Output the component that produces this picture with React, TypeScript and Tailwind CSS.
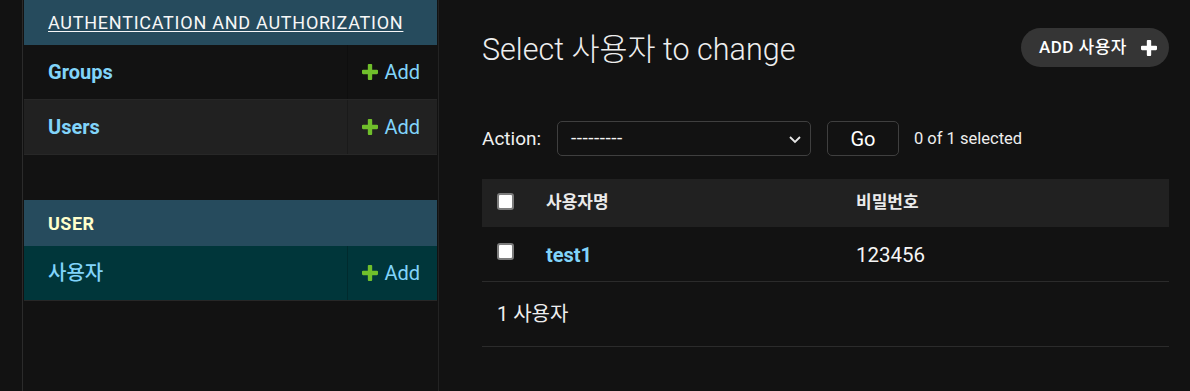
import React from 'react';

const PLUS_PATH =
  'M1600 796v192q0 40-28 68t-68 28h-416v416q0 40-28 68t-68 28h-192q-40 0-68-28t-28-68v-416h-416q-40 0-68-28t-28-68v-192q0-40 28-68t68-28h416v-416q0-40 28-68t68-28h192q40 0 68 28t28 68v416h416q40 0 68 28t28 68z';

const PlusIcon: React.FC<{ color: string; size?: number }> = ({ color, size = 16 }) => (
  <svg width={size} height={size} viewBox="192 192 1408 1408" aria-hidden="true">
    <path d={PLUS_PATH} fill={color} />
  </svg>
);

interface ModelRowProps {
  name: string;
  bold?: boolean;
  className?: string;
}

// one row in the sidebar: model name + "Add" link
const ModelRow: React.FC<ModelRowProps> = ({ name, bold = true, className = '' }) => (
  <div className={`flex h-[55px] border-b border-[#272727] ${className}`}>
    <a
      href="#"
      className={`flex flex-1 items-center pl-6 text-[20px] text-[#81d4fa] ${bold ? 'font-bold' : 'font-medium'}`}
    >
      {name}
    </a>
    <div className="flex w-[90px] items-center justify-end gap-[6px] border-l border-black/20 pr-[17px]">
      <PlusIcon color="#70bf2b" />
      <a href="#" className="text-[20px] text-[#81d4fa]">
        Add
      </a>
    </div>
  </div>
);

const Checkbox: React.FC = () => (
  <input
    type="checkbox"
    className="h-[17px] w-[17px] appearance-none rounded-[3px] border-2 border-[#7c7c7c] bg-white"
  />
);

export default function App() {
  return (
    <div
      className="flex h-[391px] w-full overflow-hidden bg-[#121212] text-[#f5f5f5]"
      style={{ fontFamily: 'Roboto, "Noto Sans CJK KR", sans-serif' }}
    >
      {/* sidebar toggle strip */}
      <div className="w-[23px] shrink-0 border-r border-[#2b2b2b]" />

      {/* Nav sidebar */}
      <nav className="w-[416px] shrink-0 border-r border-[#232323] pl-px pr-px">
        <div>
          <div className="flex h-[45px] items-center bg-[#264b5d] pl-6">
            <a href="#" className="text-[18px] tracking-[0.75px] text-[#f7f7f7] underline underline-offset-2">
              AUTHENTICATION AND AUTHORIZATION
            </a>
          </div>
          <ModelRow name="Groups" />
          <ModelRow name="Users" className="bg-[#212121]" />
        </div>

        <div className="mt-[45px]">
          <div className="flex h-[46px] items-center bg-[#264b5d] pl-6">
            <a href="#" className="text-[18px] font-bold tracking-[0.5px] text-[#ffffcc]">
              USER
            </a>
          </div>
          <ModelRow name="사용자" bold={false} className="bg-[#00363a]" />
        </div>
      </nav>

      {/* Main content */}
      <main className="flex-1 pl-[43px] pr-[21px] pt-[28px]">
        <div className="flex h-[39px] items-center justify-between">
          <h1 className="pt-[5px] text-[30.5px] font-light leading-none text-[#eeeeee]">Select 사용자 to change</h1>
          <a
            href="#"
            className="flex h-[39px] items-center gap-[14px] rounded-full bg-[#353535] pl-[18px] pr-[12px] text-[17px] font-medium tracking-[0.5px] text-white"
          >
            ADD 사용자
            <PlusIcon color="#ffffff" />
          </a>
        </div>

        {/* actions */}
        <div className="mt-[54px] flex h-[35px] items-center">
          <label className="w-[60px] pt-[2px] text-[19px] text-[#f0f0f0]">Action:</label>
          <div className="ml-[15px] flex h-[35px] w-[254px] items-center justify-between rounded-[5px] border border-[#3f3f3f] pl-[13px] pr-[8px]">
            <span className="text-[19px] tracking-[0.5px]">---------</span>
            <svg width="14" height="14" viewBox="0 0 14 14" fill="none">
              <path d="M2 5l5 5 5-5" stroke="#e6e6e6" strokeWidth="1.8" />
            </svg>
          </div>
          <button className="ml-4 h-[35px] w-[72px] rounded-[5px] border border-[#3f3f3f] text-[20px] text-white">
            Go
          </button>
          <span className="ml-[15px] pt-[2px] text-[16.5px] text-[#eeeeee]">0 of 1 selected</span>
        </div>

        {/* result list */}
        <div className="mt-[23px]">
          <div className="grid h-[48px] grid-cols-[64px_310px_1fr] items-center bg-[#212121]">
            <div className="-mt-[3px] flex pl-[15px]">
              <Checkbox />
            </div>
            <span className="text-[17px] font-semibold text-[#eaeaea]">사용자명</span>
            <span className="text-[17px] font-semibold text-[#eaeaea]">비밀번호</span>
          </div>
          <div className="grid h-[55px] grid-cols-[64px_310px_1fr] items-center border-b border-[#2b2b2b]">
            <div className="-mt-[5px] flex pl-[15px]">
              <Checkbox />
            </div>
            <a href="#" className="pt-[2px] text-[20px] font-bold text-[#81d4fa]">
              test1
            </a>
            <span className="pt-[2px] text-[20.5px] text-[#f5f5f5]">123456</span>
          </div>
          <div className="flex h-[65px] items-center border-b border-[#2b2b2b] pl-[15px] text-[20px] text-[#eeeeee]">
            1 사용자
          </div>
        </div>
      </main>
    </div>
  );
}
